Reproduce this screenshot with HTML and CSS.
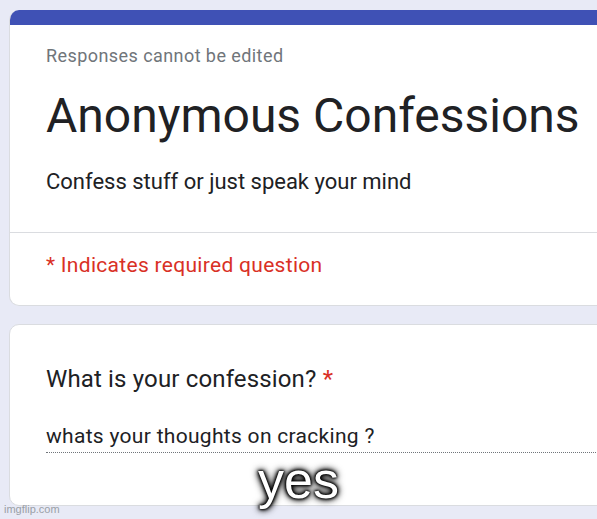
FILE: index.html
```html
<!DOCTYPE html>
<html>
<head>
<meta charset="utf-8">
<link rel="stylesheet" href="styles.css">
</head>
<body>
<main class="page">
  <section class="card header-card">
    <div class="band"></div>
    <div class="header-main">
      <p class="notice">Responses cannot be edited</p>
      <h1 class="title">Anonymous Confessions</h1>
      <p class="desc">Confess stuff or just speak your mind</p>
    </div>
    <div class="header-foot">
      <p class="required">* Indicates required question</p>
    </div>
  </section>
  <section class="card question-card">
    <h2 class="question">What is your confession? <span class="star">*</span></h2>
    <div class="answer">whats your thoughts on cracking ?</div>
  </section>
</main>
<div class="caption">yes</div>
<div class="watermark">imgflip.com</div>
</body>
</html>
```
FILE: styles.css
```css
html, body {
  margin: 0;
  padding: 0;
}
body {
  width: 597px;
  height: 519px;
  overflow: hidden;
  background: #e8eaf6;
  font-family: Roboto, "Liberation Sans", sans-serif;
  position: relative;
}
.page {
  padding: 10px 0 0 9px;
  display: flex;
  flex-direction: column;
  gap: 18px;
  width: 588px;
  overflow: hidden;
}
.card {
  background: #fff;
  border: 1px solid #dadce0;
  border-radius: 10px;
  box-sizing: border-box;
  width: 680px;
  flex: none;
}
.header-card {
  border-top: none;
  overflow: hidden;
  height: 296px;
}
.band {
  height: 15px;
  background: #3f51b5;
  margin: 0 -1px;
}
.header-main {
  padding: 19px 36px 0;
  height: 208px;
  border-bottom: 1px solid #dadce0;
  box-sizing: border-box;
}
.notice {
  margin: 0;
  font-size: 18px;
  letter-spacing: 0.43px;
  line-height: 24px;
  color: #70757a;
}
.title {
  margin: 20px 0 0;
  font-size: 48px;
  font-weight: 400;
  line-height: 56px;
  color: #202124;
}
.desc {
  margin: 24px 0 0;
  font-size: 22px;
  line-height: 28px;
  color: #202124;
}
.header-foot {
  padding: 18px 36px 0;
}
.required {
  margin: 0;
  font-size: 21px;
  letter-spacing: 0.3px;
  line-height: 28px;
  color: #d93025;
}
.question-card {
  height: 182px;
  padding: 39px 0 0 36px;
}
.question {
  margin: 0;
  font-size: 24px;
  font-weight: 400;
  letter-spacing: 0.15px;
  line-height: 30px;
  color: #202124;
}
.star {
  color: #d93025;
}
.answer {
  margin-top: 29px;
  font-size: 21px;
  letter-spacing: 0.3px;
  line-height: 26px;
  color: #202124;
  padding-bottom: 3px;
  border-bottom: 1px dotted #70757a;
}
.caption {
  position: absolute;
  left: 0;
  width: 597px;
  top: 450px;
  text-align: center;
  font-family: "Liberation Sans", Arial, sans-serif;
  font-size: 52px;
  line-height: 60px;
  color: #fff;
  text-shadow: 0 0 2px #000, 0 0 3px #000, 0 0 4px #000, 0 0 6px #000, 0 0 8px #000;
}
.watermark {
  position: absolute;
  left: 4px;
  top: 502px;
  font-family: "Liberation Sans", Arial, sans-serif;
  font-size: 11px;
  line-height: 14px;
  color: #9aa0a6;
}
```
